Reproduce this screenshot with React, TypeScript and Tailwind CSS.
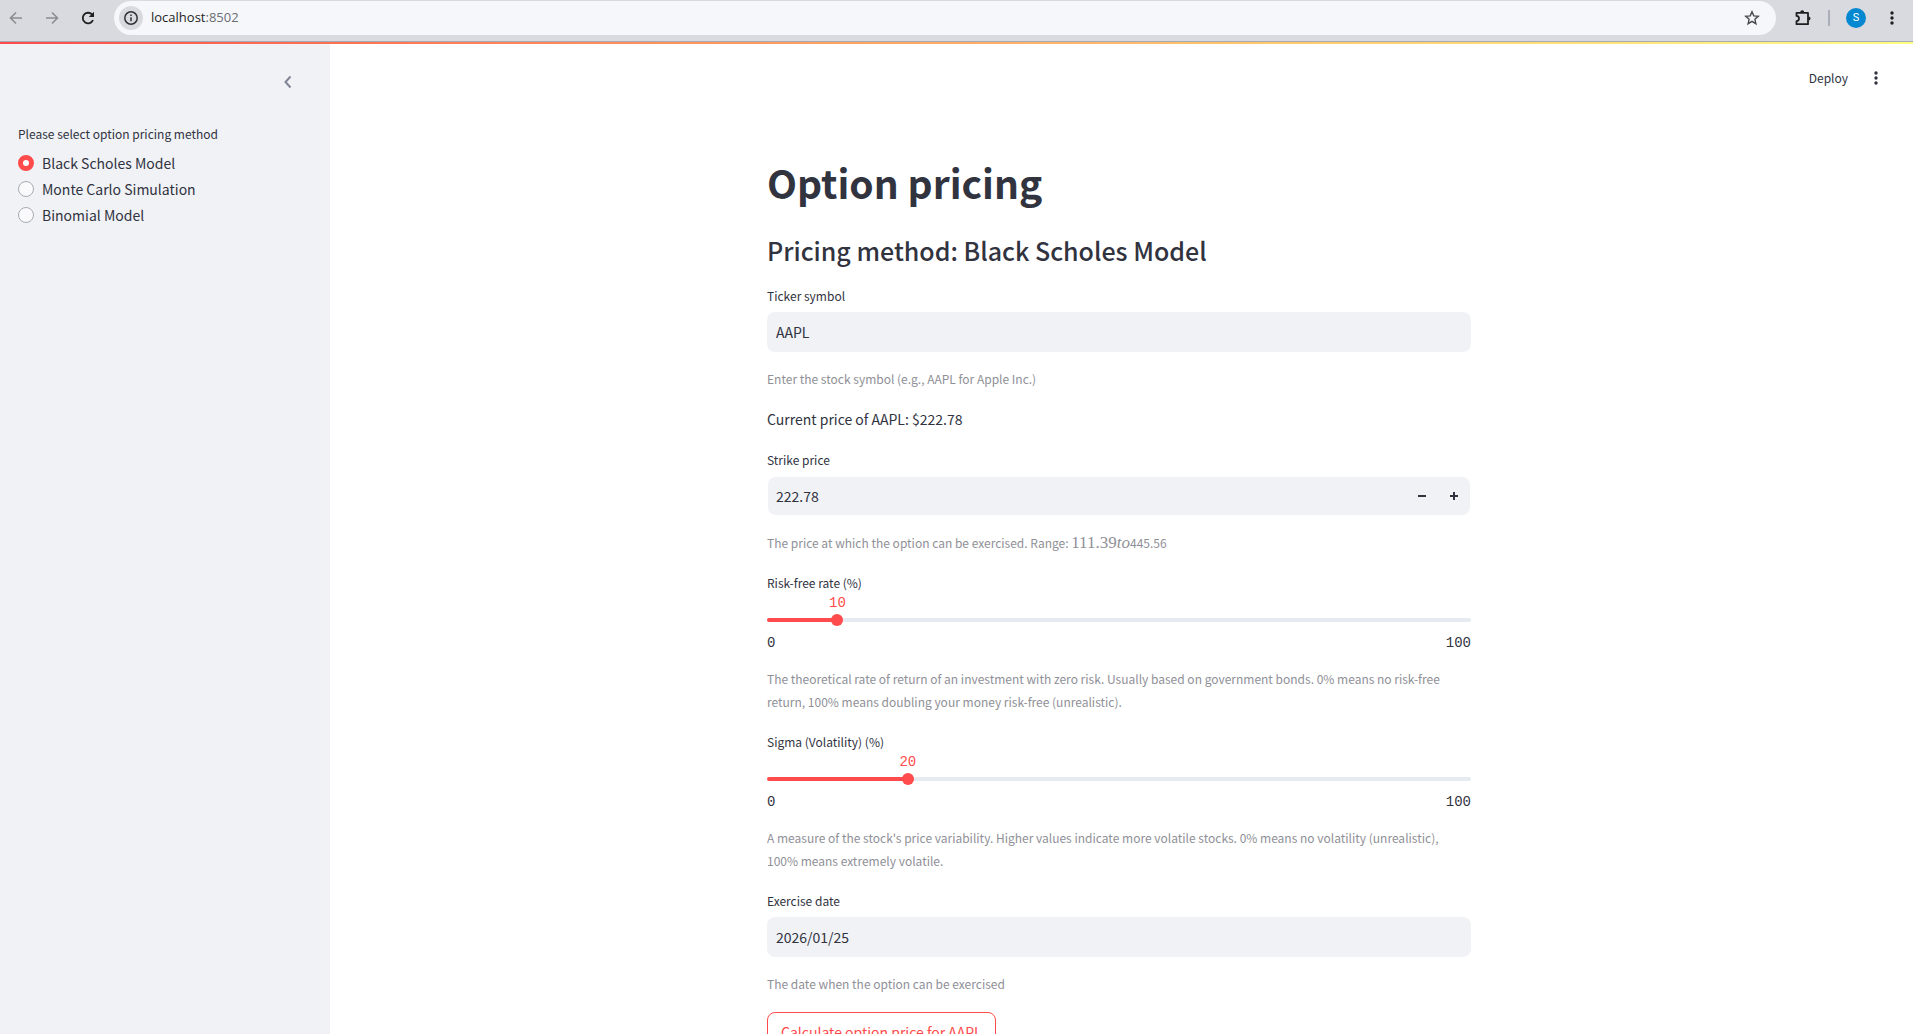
import { useState, type ReactNode } from "react";

const methods = ["Black Scholes Model", "Monte Carlo Simulation", "Binomial Model"];

function BrowserBar() {
  return (
    <header className="flex h-[41px] shrink-0 items-start bg-[#d9dadf] pr-[13px]">
      <div className="flex h-9 items-center">
        <button type="button" aria-label="Back" className="flex w-8 justify-center text-[#8b8d91]">
          <svg viewBox="0 0 16 16" className="h-4 w-4" fill="none" stroke="currentColor" strokeWidth="1.6">
            <path d="M14 8H3M8 2.500 2.500 8 8 13.500" />
          </svg>
        </button>
        <button type="button" aria-label="Forward" className="ml-1 flex w-8 justify-center text-[#8b8d91]">
          <svg viewBox="0 0 16 16" className="h-4 w-4" fill="none" stroke="currentColor" strokeWidth="1.6">
            <path d="M2 8h11M8 2.500 13.500 8 8 13.500" />
          </svg>
        </button>
        <button type="button" aria-label="Reload" className="ml-1 flex w-8 justify-center text-[#1f1f1f]">
          <svg viewBox="0 0 16 16" className="h-4 w-4" fill="none" stroke="currentColor" strokeWidth="1.8">
            <path d="M13 10A5.300 5.300 0 1 1 12.400 5L13.500 6.200" />
            <path d="M14 1.800V7H8.800z" fill="currentColor" stroke="none" />
          </svg>
        </button>
      </div>
      <div className="mt-px ml-[10px] flex h-[34px] min-w-0 flex-1 items-center rounded-full bg-[#f5f7fa] pr-4 pl-[5px]">
        <button
          type="button"
          aria-label="View site information"
          className="flex h-6 w-6 items-center justify-center rounded-full bg-[#d9dadf] text-[#303134]"
        >
          <svg viewBox="0 0 16 16" className="h-4 w-4" fill="none" stroke="currentColor" strokeWidth="1.5">
            <circle cx="8" cy="8" r="6.200" />
            <path d="M8 7.300v4M8 4.500v1.600" />
          </svg>
        </button>
        <p className="ml-2 flex-1 font-['Open_Sans',sans-serif] text-[13px] text-[#1f1f1f]">
          localhost<span className="text-[#6b6e73]">:8502</span>
        </p>
        <button type="button" aria-label="Bookmark this tab" className="text-[#47494d]">
          <svg viewBox="0 0 16 16" className="h-4 w-4" fill="none" stroke="currentColor" strokeWidth="1.4">
            <path d="m8 1.800 1.800 4.100 4.500.4-3.400 3 1 4.400L8 11.400l-3.900 2.300 1-4.400-3.400-3 4.500-.4z" />
          </svg>
        </button>
      </div>
      <div className="flex h-9 items-center">
        <button type="button" aria-label="Extensions" className="ml-[18px] text-[#1f1f1f]">
          <svg viewBox="0 0 18 18" className="h-[18px] w-[18px]" fill="none" stroke="currentColor" strokeWidth="1.800">
            <path d="M2.500 3.800H14v11.400H2.500v-3.100c3.300-.3 3.300-4.900 0-5.200z" strokeLinejoin="round" />
            <path d="M6.200 3.300a2 2 0 0 1 4 0zM14.500 7.500a2 2 0 0 1 0 4z" fill="currentColor" stroke="none" />
          </svg>
        </button>
        <span className="ml-4 h-4 w-0.5 bg-[#a9afba]" />
        <button
          type="button"
          aria-label="Profile"
          className="ml-4 flex h-5 w-5 items-center justify-center rounded-full bg-[#0288d1] font-[Roboto,sans-serif] text-[11px] text-white"
        >
          S
        </button>
        <button type="button" aria-label="Browser menu" className="ml-[18px] text-[#1f1f1f]">
          <Dots />
        </button>
      </div>
    </header>
  );
}

function Dots() {
  return (
    <svg viewBox="0 0 16 16" className="h-4 w-4" fill="currentColor">
      <circle cx="8" cy="3" r="1.700" />
      <circle cx="8" cy="8" r="1.700" />
      <circle cx="8" cy="13" r="1.700" />
    </svg>
  );
}

function Caption({ children }: { children: ReactNode }) {
  return <p className="mt-[15px] pb-px text-[12px] leading-[23px] text-[#8f9097]">{children}</p>;
}

function Label({ id, children }: { id: string; children: ReactNode }) {
  return (
    <label htmlFor={id} className="block text-[12px] leading-6">
      {children}
    </label>
  );
}

function TextField({ id, label, initial }: { id: string; label: string; initial: string }) {
  return (
    <div className="mt-4">
      <Label id={id}>{label}</Label>
      <input
        id={id}
        type="text"
        defaultValue={initial}
        className="mt-1 block h-10 w-full rounded-lg bg-[#f0f2f6] px-[9px] text-[14px] outline-none"
      />
    </div>
  );
}

function StrikeField() {
  const [value, setValue] = useState("222.78");
  const step = (d: number) => setValue((Number(value) + d).toFixed(2));
  return (
    <div className="mt-4">
      <Label id="strike">Strike price</Label>
      <div className="mt-1 flex h-10 items-stretch overflow-hidden rounded-[9px] border border-white bg-[#f0f2f6]">
        <input
          id="strike"
          type="text"
          inputMode="decimal"
          value={value}
          onChange={(e) => setValue(e.target.value)}
          className="min-w-0 flex-1 bg-transparent px-2 text-[14px] outline-none"
        />
        <button type="button" aria-label="Decrease" onClick={() => step(-0.01)} className="flex w-8 items-center justify-center">
          <svg viewBox="0 0 8 8" className="h-2 w-2" fill="currentColor">
            <path d="M0 3h8v2H0z" />
          </svg>
        </button>
        <button type="button" aria-label="Increase" onClick={() => step(0.01)} className="flex w-8 items-center justify-center">
          <svg viewBox="0 0 8 8" className="h-2 w-2" fill="currentColor">
            <path d="M3 0h2v3h3v2H5v3H3V5H0V3h3z" />
          </svg>
        </button>
      </div>
    </div>
  );
}

function PercentSlider({ id, label, initial }: { id: string; label: string; initial: number }) {
  const [value, setValue] = useState(initial);
  return (
    <div className="mt-4 h-[81px]">
      <Label id={id}>{label}</Label>
      <div className="relative pt-[23px] font-['Liberation_Mono',monospace] text-[14px] leading-5">
        <output
          htmlFor={id}
          className="absolute top-[-2px] -translate-x-1/2 text-[#ff4b4b]"
          style={{ left: `${value}%` }}
        >
          {value}
        </output>
        <div className="relative h-1 rounded-full bg-[#e6eaf1]">
          <div className="h-1 rounded-full bg-[#ff4b4b]" style={{ width: `${value}%` }} />
          <input
            id={id}
            type="range"
            min={0}
            max={100}
            value={value}
            onChange={(e) => setValue(Number(e.target.value))}
            className="absolute -inset-x-1.5 -top-1 h-3 appearance-none bg-transparent outline-none [&::-webkit-slider-thumb]:h-3 [&::-webkit-slider-thumb]:w-3 [&::-webkit-slider-thumb]:appearance-none [&::-webkit-slider-thumb]:rounded-full [&::-webkit-slider-thumb]:bg-[#ff4b4b]"
          />
        </div>
        <div className="mt-[11px] flex justify-between">
          <span>0</span>
          <span>100</span>
        </div>
      </div>
    </div>
  );
}

function Sidebar() {
  const [method, setMethod] = useState(methods[0]);
  return (
    <aside className="flex w-[330px] shrink-0 flex-col bg-[#f0f2f6] px-[18px]">
      <button type="button" aria-label="Collapse sidebar" className="mt-[30px] mr-4 flex h-4 w-4 items-center justify-center self-end text-[#808495]">
        <svg viewBox="0 0 16 16" className="h-4 w-4" fill="none" stroke="currentColor" strokeWidth="2">
          <path d="M10.500 2.500 5.500 8l5 5.500" />
        </svg>
      </button>
      <fieldset className="mt-8">
        <legend className="text-[12px] leading-6">Please select option pricing method</legend>
        <div className="mt-1 flex flex-col">
          {methods.map((m) => (
            <label key={m} className="flex h-[26px] items-center gap-2 text-[14px] leading-5">
              <input
                type="radio"
                name="method"
                checked={method === m}
                onChange={() => setMethod(m)}
                className="h-4 w-4 appearance-none rounded-full border border-[#a9abb5] bg-[#fafafc] checked:border-[5px] checked:border-[#ff4b4b] checked:bg-white"
              />
              {m}
            </label>
          ))}
        </div>
      </fieldset>
    </aside>
  );
}

export default function App() {
  return (
    <div className="flex h-screen flex-col overflow-hidden bg-white font-['Noto_Sans_CJK_SC','Open_Sans',sans-serif] text-[#31333f]">
      <BrowserBar />
      <div className="h-[3px] shrink-0 border-t border-[#a8abb3] bg-linear-to-r from-[#ff4b4b] to-[#fffd80]" />
      <div className="flex min-h-0 flex-1">
        <Sidebar />
        <div className="relative min-w-0 flex-1">
          <div className="absolute top-[22px] right-[29px] flex items-center gap-5">
            <button type="button" className="text-[12px] leading-6">
              Deploy
            </button>
            <button type="button" aria-label="App menu">
              <Dots />
            </button>
          </div>
          <main className="h-full overflow-y-auto pr-[5px] [scrollbar-width:none]">
            <div className="mx-auto max-w-[704px] pt-28 pb-24">
              <h1 className="text-[39px] leading-[53px] font-bold">Option pricing</h1>
              <h2 className="mt-[25px] mb-[17px] text-[25px] leading-[33px] font-medium">Pricing method: Black Scholes Model</h2>
              <TextField id="ticker" label="Ticker symbol" initial="AAPL" />
              <Caption>Enter the stock symbol (e.g., AAPL for Apple Inc.)</Caption>
              <p className="mt-4 text-[14px] leading-[25px]">Current price of AAPL: $222.78</p>
              <StrikeField />
              <Caption>
                The price at which the option can be exercised. Range:{" "}
                <span className="font-['Liberation_Serif',serif] text-[17px]">
                  111.39<i>to</i>
                </span>
                445.56
              </Caption>
              <PercentSlider id="rate" label="Risk-free rate (%)" initial={10} />
              <Caption>
                The theoretical rate of return of an investment with zero risk. Usually based on government bonds. 0% means no risk-free
                <br />
                return, 100% means doubling your money risk-free (unrealistic).
              </Caption>
              <PercentSlider id="sigma" label="Sigma (Volatility) (%)" initial={20} />
              <Caption>
                A measure of the stock's price variability. Higher values indicate more volatile stocks. 0% means no volatility (unrealistic),
                <br />
                100% means extremely volatile.
              </Caption>
              <TextField id="date" label="Exercise date" initial="2026/01/25" />
              <Caption>The date when the option can be exercised</Caption>
              <button type="button" className="mt-4 h-10 rounded-lg border border-[#ff4b4b] px-[13px] text-[14px] text-[#ff4b4b]">
                Calculate option price for AAPL
              </button>
            </div>
          </main>
        </div>
      </div>
    </div>
  );
}
